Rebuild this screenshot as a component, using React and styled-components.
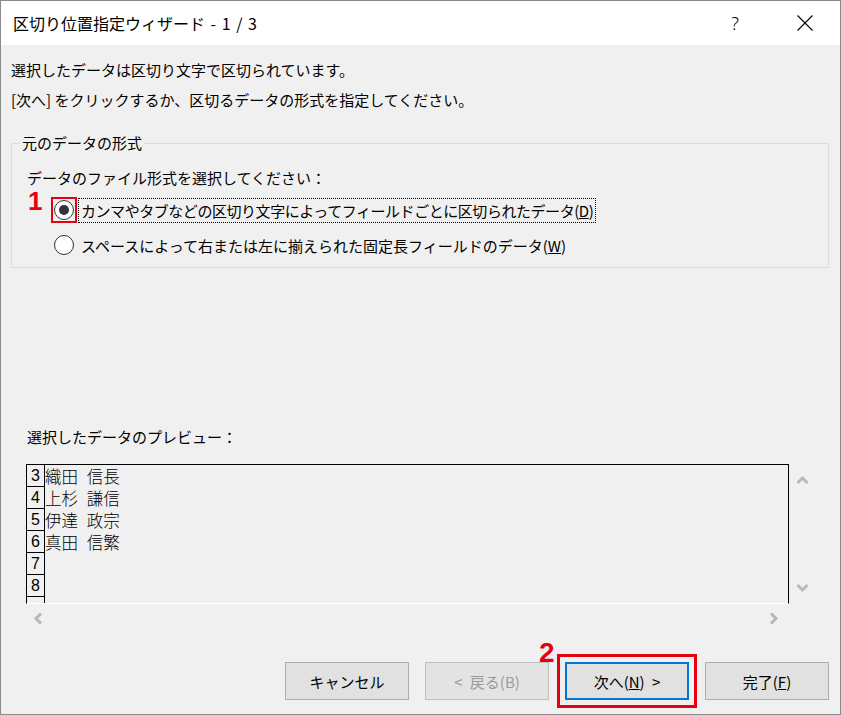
import React from 'react';
import styled, { createGlobalStyle } from 'styled-components';

const GlobalStyle = createGlobalStyle`
  html, body {
    margin: 0;
    padding: 0;
    background: #f0f0f0;
  }
  body {
    font-family: "Noto Sans CJK JP", "Noto Sans", sans-serif;
    color: #000;
  }
`;

const Window = styled.div`
  width: 841px;
  height: 715px;
  box-sizing: border-box;
  border: 1px solid #8a8a8a;
  background: #f0f0f0;
  display: flex;
  flex-direction: column;
  overflow: hidden;
`;

const TitleBar = styled.div`
  height: 44px;
  flex-shrink: 0;
  background: #fff;
  display: flex;
  align-items: center;
`;

const TitleText = styled.div`
  flex: 1;
  padding-left: 12px;
  font-size: 16px;
  line-height: 20px;
  word-spacing: 2px;
`;

const TitleButton = styled.div`
  width: 70px;
  height: 44px;
  display: flex;
  align-items: center;
  justify-content: center;
  font-family: "Noto Sans", sans-serif;
  font-weight: 300;
  font-size: 18px;
`;

const Body = styled.div`
  flex: 1;
  display: flex;
  flex-direction: column;
  padding: 15px 11px 14px 10px;
`;

const Message = styled.p`
  margin: 0;
  font-size: 15px;
  line-height: 20px;
  & + & {
    margin-top: 10px;
  }
`;

const Group = styled.fieldset`
  margin: 24px 0 0;
  padding: 0 0 9px 8px;
  border: 1px solid #dcdcdc;
  min-width: 0;
`;

const Legend = styled.legend`
  padding: 0 2px;
  font-size: 15px;
  line-height: 18px;
`;

const GroupInner = styled.div`
  padding: 16px 0 0 7px;
`;

const Prompt = styled.div`
  font-size: 15px;
  line-height: 20px;
`;

const RadioRow = styled.div`
  margin-top: 9px;
  height: 26px;
  display: flex;
  align-items: center;
  padding-left: 27px;
`;

const Marker = styled.span`
  position: relative;
  width: 20px;
  height: 20px;
  flex-shrink: 0;
  outline: ${(p) => (p.$marked ? '2px solid #e60012' : 'none')};
  outline-offset: 1px;
`;

const RadioCircle = styled.span`
  width: 20px;
  height: 20px;
  box-sizing: border-box;
  border: 1px solid #333;
  border-radius: 50%;
  background: #fff;
  display: flex;
  align-items: center;
  justify-content: center;
`;

const Dot = styled.span`
  width: 10px;
  height: 10px;
  border-radius: 50%;
  background: #333;
`;

const Badge = styled.span`
  position: absolute;
  left: ${(p) => p.$left}px;
  top: ${(p) => p.$top}px;
  font-family: "Liberation Sans", Arial, sans-serif;
  font-weight: 700;
  font-size: ${(p) => p.$size}px;
  line-height: 0.8;
  color: #e60012;
`;

const RadioLabel = styled.span`
  margin-left: 4px;
  height: 25px;
  box-sizing: border-box;
  border: 1px dotted ${(p) => (p.$focused ? '#000' : 'transparent')};
  padding: 0 2px;
  font-size: 15px;
  line-height: 23px;
  letter-spacing: ${(p) => (p.$focused ? '-0.45px' : '0')};
  white-space: nowrap;
`;

const Spacer = styled.div`
  flex: 1;
`;

const PreviewLabel = styled.div`
  padding-left: 16px;
  font-size: 15px;
  line-height: 20px;
`;

const PreviewGrid = styled.div`
  margin: 17px 0 0 15px;
  display: grid;
  grid-template-columns: 763px 27px;
  grid-template-rows: 140px 28px;
`;

const PreviewBox = styled.div`
  box-sizing: border-box;
  border: 1px solid #000;
  border-bottom-color: #fff;
  overflow: hidden;
`;

const PreviewRow = styled.div`
  display: flex;
  height: 22px;
  overflow: hidden;
`;

const RowNum = styled.div`
  width: 18px;
  height: 22px;
  flex-shrink: 0;
  box-sizing: border-box;
  border-right: 1px solid #000;
  border-bottom: 1px solid #000;
  font-family: "Liberation Sans", Arial, sans-serif;
  font-size: 16px;
  line-height: 22px;
  text-align: center;
  overflow: hidden;
`;

const RowText = styled.div`
  font-size: 16.5px;
  font-weight: 300;
  line-height: 22px;
  white-space: pre;
  word-spacing: 5px;
`;

const VScroll = styled.div`
  display: flex;
  flex-direction: column;
  justify-content: space-between;
  align-items: center;
  padding: 11px 0 9px;
`;

const HScroll = styled.div`
  display: flex;
  align-items: center;
  justify-content: space-between;
  padding: 0 8px 0 7px;
`;

const ButtonRow = styled.div`
  margin-top: 30px;
  display: flex;
  justify-content: flex-end;
  gap: 16px;
`;

const Button = styled.button`
  position: relative;
  width: 124px;
  height: 38px;
  box-sizing: border-box;
  background: #e1e1e1;
  border: ${(p) => (p.$primary ? '2px solid #0078d7' : '1px solid #adadad')};
  font-family: "Noto Sans CJK JP", sans-serif;
  font-size: 15px;
  word-spacing: 4px;
  color: #000;
  padding: 0;
  outline: ${(p) => (p.$marked ? '3px solid #e60012' : 'none')};
  outline-offset: 5px;

  &:disabled {
    color: #9a9a9a;
    border-color: #bfbfbf;
    background: #e3e3e3;
  }
`;

const Chevron = ({ dir }) => {
  const pts = {
    up: '1.5,8 6.5,3 11.5,8',
    down: '1.5,3 6.5,8 11.5,3',
    left: '8,1.5 3,6.5 8,11.5',
    right: '3,1.5 8,6.5 3,11.5',
  }[dir];
  return (
    <svg width="13" height="13" viewBox="0 0 13 13">
      <polyline points={pts} fill="none" stroke="#b8b8b8" strokeWidth="3" />
    </svg>
  );
};

const ROWS = [
  ['3', '織田 信長'],
  ['4', '上杉 謙信'],
  ['5', '伊達 政宗'],
  ['6', '真田 信繁'],
  ['7', ''],
  ['8', ''],
  ['', ''],
];

export default function App() {
  return (
    <Window>
      <GlobalStyle />
      <TitleBar>
        <TitleText>区切り位置指定ウィザード - 1 / 3</TitleText>
        <TitleButton>?</TitleButton>
        <TitleButton>
          <svg width="16" height="16" viewBox="0 0 16 16">
            <path d="M0.5 0.5 L15.5 15.5 M15.5 0.5 L0.5 15.5" stroke="#000" strokeWidth="1.1" />
          </svg>
        </TitleButton>
      </TitleBar>

      <Body>
        <Message>選択したデータは区切り文字で区切られています。</Message>
        <Message>[次へ] をクリックするか、区切るデータの形式を指定してください。</Message>

        <Group>
          <Legend>元のデータの形式</Legend>
          <GroupInner>
            <Prompt>データのファイル形式を選択してください：</Prompt>
            <RadioRow>
              <Marker $marked>
                <RadioCircle>
                  <Dot />
                </RadioCircle>
                <Badge $left={-26} $top={-9} $size={26}>1</Badge>
              </Marker>
              <RadioLabel $focused>
                カンマやタブなどの区切り文字によってフィールドごとに区切られたデータ(<u>D</u>)
              </RadioLabel>
            </RadioRow>
            <RadioRow>
              <Marker>
                <RadioCircle />
              </Marker>
              <RadioLabel>
                スペースによって右または左に揃えられた固定長フィールドのデータ(<u>W</u>)
              </RadioLabel>
            </RadioRow>
          </GroupInner>
        </Group>

        <Spacer />

        <PreviewLabel>選択したデータのプレビュー：</PreviewLabel>
        <PreviewGrid>
          <PreviewBox>
            {ROWS.map(([n, t], i) => (
              <PreviewRow key={i}>
                <RowNum>{n}</RowNum>
                <RowText>{t}</RowText>
              </PreviewRow>
            ))}
          </PreviewBox>
          <VScroll>
            <Chevron dir="up" />
            <Chevron dir="down" />
          </VScroll>
          <HScroll>
            <Chevron dir="left" />
            <Chevron dir="right" />
          </HScroll>
        </PreviewGrid>

        <ButtonRow>
          <Button>キャンセル</Button>
          <Button disabled>&lt; 戻る(B)</Button>
          <Button $primary $marked>
            次へ(<u>N</u>) &gt;
            <Badge $left={-28} $top={-22} $size={28}>2</Badge>
          </Button>
          <Button>完了(<u>F</u>)</Button>
        </ButtonRow>
      </Body>
    </Window>
  );
}
